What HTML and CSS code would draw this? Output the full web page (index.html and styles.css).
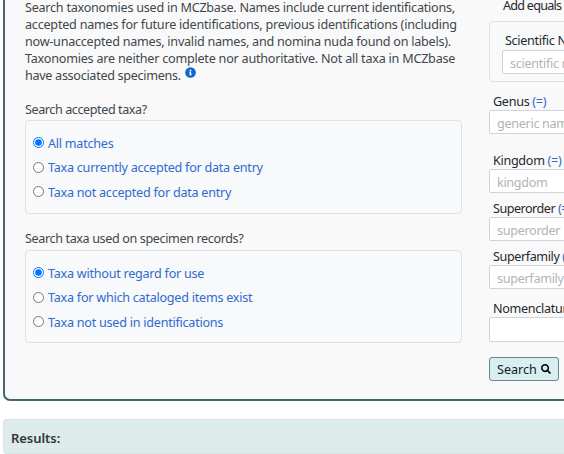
FILE: index.html
```
<!DOCTYPE html>
<html lang="en">
<head>
<meta charset="utf-8">
<title>Search Taxonomy</title>
<link rel="stylesheet" href="styles.css">
</head>
<body>
<main class="search-card">
  <section class="left">
    <p class="intro"><span class="l1">Search taxonomies used in MCZbase. Names include current identifications,</span><br><span class="l2">accepted names for future identifications, previous identifications (including</span><br><span class="l3">now-unaccepted names, invalid names, and nomina nuda found on labels).</span><br><span class="l4">Taxonomies are neither complete nor authoritative. Not all taxa in MCZbase</span><br><span class="l5">have associated specimens.</span> <svg class="info" viewBox="0 0 512 512"><path fill="#0b6bcb" d="M256 8a248 248 0 1 0 0 496 248 248 0 0 0 0-496z"/><path fill="#fff" d="M256 118a42 42 0 1 1 0 84 42 42 0 0 1 0-84zM312 372c0 7-5 12-12 12h-88c-7 0-12-5-12-12v-24c0-7 5-12 12-12h12v-64h-12c-7 0-12-5-12-12v-24c0-7 5-12 12-12h64c7 0 12 5 12 12v100h12c7 0 12 5 12 12z"/></svg></p>
    <h2 class="legend">Search accepted taxa?</h2>
    <div class="options first">
      <label><input type="radio" name="valid" checked><span>All matches</span></label>
      <label><input type="radio" name="valid"><span>Taxa currently accepted for data entry</span></label>
      <label><input type="radio" name="valid"><span>Taxa not accepted for data entry</span></label>
    </div>
    <h2 class="legend used">Search taxa used on specimen records?</h2>
    <div class="options second">
      <label><input type="radio" name="used" checked><span>Taxa without regard for use</span></label>
      <label><input type="radio" name="used"><span>Taxa for which cataloged items exist</span></label>
      <label><input type="radio" name="used"><span>Taxa not used in identifications</span></label>
    </div>
  </section>
  <section class="right">
    <p class="hint">Add equals</p>
    <div class="name-box">
      <label class="field-label">Scientific Name</label>
      <input type="text" placeholder="scientific name">
    </div>
    <div class="field genus"><label class="field-label">Genus <a>(=)</a></label><input type="text" placeholder="generic name"></div>
    <div class="field kingdom"><label class="field-label">Kingdom <a>(=)</a></label><input type="text" placeholder="kingdom"></div>
    <div class="field order"><label class="field-label">Superorder <a>(=)</a></label><input type="text" placeholder="superorder"></div>
    <div class="field family"><label class="field-label">Superfamily <a>(=)</a></label><input type="text" placeholder="superfamily"></div>
    <div class="field code"><label class="field-label">Nomenclatural Code</label><input type="text"></div>
    <button class="search" type="button"><span>Search</span><svg viewBox="0 0 512 512"><path d="M505 442.700 405.300 343c-4.500-4.500-10.600-7-17-7H372c27.600-35.300 44-79.700 44-128C416 93.100 322.900 0 208 0S0 93.100 0 208s93.100 208 208 208c48.300 0 92.700-16.400 128-44v16.300c0 6.400 2.500 12.500 7 17l99.700 99.700c9.400 9.400 24.600 9.400 33.900 0l28.300-28.300c9.400-9.400 9.400-24.600.1-34zM208 336c-70.700 0-128-57.200-128-128 0-70.700 57.200-128 128-128 70.700 0 128 57.200 128 128 0 70.700-57.200 128-128 128z"/></svg></button>
  </section>
</main>
<header class="results">Results:</header>
</body>
</html>
```
FILE: styles.css
```
* { box-sizing: border-box; }
body {
  margin: 0;
  width: 564px;
  height: 454px;
  overflow: hidden;
  background: #fff;
  color: #40464c;
  font: 12.600px/17px "Noto Sans", "Open Sans", sans-serif;
  letter-spacing: -0.3px;
}
.search-card {
  display: flex;
  gap: 27px;
  width: 561px;
  height: 401px;
  margin-left: 3px;
  padding-left: 20px;
  overflow: hidden;
  background: #f9f9f9;
  border: 2px solid #46686c;
  border-top: 0;
  border-right: 0;
  border-radius: 0 0 0 7px;
  white-space: nowrap;
}
.left { flex: 0 0 437px; }
.intro { height: 85px; margin: -1px 0 0; }
.l1, .l3 { letter-spacing: -0.245px; }
.l2, .l4 { letter-spacing: -0.225px; }
.info { width: 11px; height: 11px; margin-left: 1px; vertical-align: 2px; }
.legend { margin: 17px 0 0; font-size: inherit; font-weight: 400; line-height: 17px; letter-spacing: -0.42px; }
.options {
  height: 94px;
  padding: 10px 7px;
  border: 1px solid #dee2e6;
  border-radius: 4px;
  background: #f8f9fb;
  color: #2f6bce;
  letter-spacing: -0.25px;
}
.options label { display: flex; align-items: center; height: 24.500px; }
.options input { width: 11px; height: 11px; margin: -1px 4px 0 0; }
.first { margin-top: 2px; }
.used { margin-top: 16px; letter-spacing: -0.38px; }
.second { height: 93px; margin-top: 3px; }
.right { flex: 0 0 260px; color: #24282c; }
.hint { margin: -3px 0 7px 14px; letter-spacing: -0.75px; }
.name-box {
  height: 61px;
  padding: 10px 12px;
  border: 1px solid #dee2e6;
  border-radius: 4px;
  background: #f8f9fb;
}
.field-label { display: block; height: 17px; padding-left: 4px; }
a { color: #2f6bce; }
input[type="text"] {
  display: block;
  width: 100%;
  height: 24px;
  padding: 2px 7px 0;
  border: 1px solid #ced4da;
  border-radius: 2px;
  background: #fff;
  font: inherit;
  letter-spacing: inherit;
}
input::placeholder { color: #b3b3b3; opacity: 1; }
.name-box .field-label { padding-left: 3px; }
.name-box input[type="text"] { margin-top: 1px; }
.field { height: 48px; padding-top: 7px; }
.genus { margin-top: 4px; }
.kingdom { margin-top: 11px; }
.order .field-label { letter-spacing: -0.5px; }
.family .field-label { letter-spacing: -0.4px; }
.code { padding-top: 11px; height: 52px; }
.code input[type="text"] { height: 25px; }
.search {
  display: flex;
  align-items: center;
  gap: 4px;
  width: 70px;
  height: 24px;
  margin-top: 16px;
  padding: 0 7px;
  border: 1px solid #6c8588;
  border-radius: 3px;
  background: #d7eff0;
  color: #16191c;
  font: inherit;
}
.search svg { width: 10px; height: 10px; }
.results {
  height: 35px;
  margin: 18px 0 0 3px;
  padding: 10px 0 0 7px;
  border: 1px solid #d7e3e4;
  border-right: 0;
  border-radius: 4px 0 0 4px;
  background: #deebeb;
  color: #30363a;
  font-weight: 600;
  font-size: 13px;
  line-height: 17px;
  letter-spacing: -0.05px;
}
```
